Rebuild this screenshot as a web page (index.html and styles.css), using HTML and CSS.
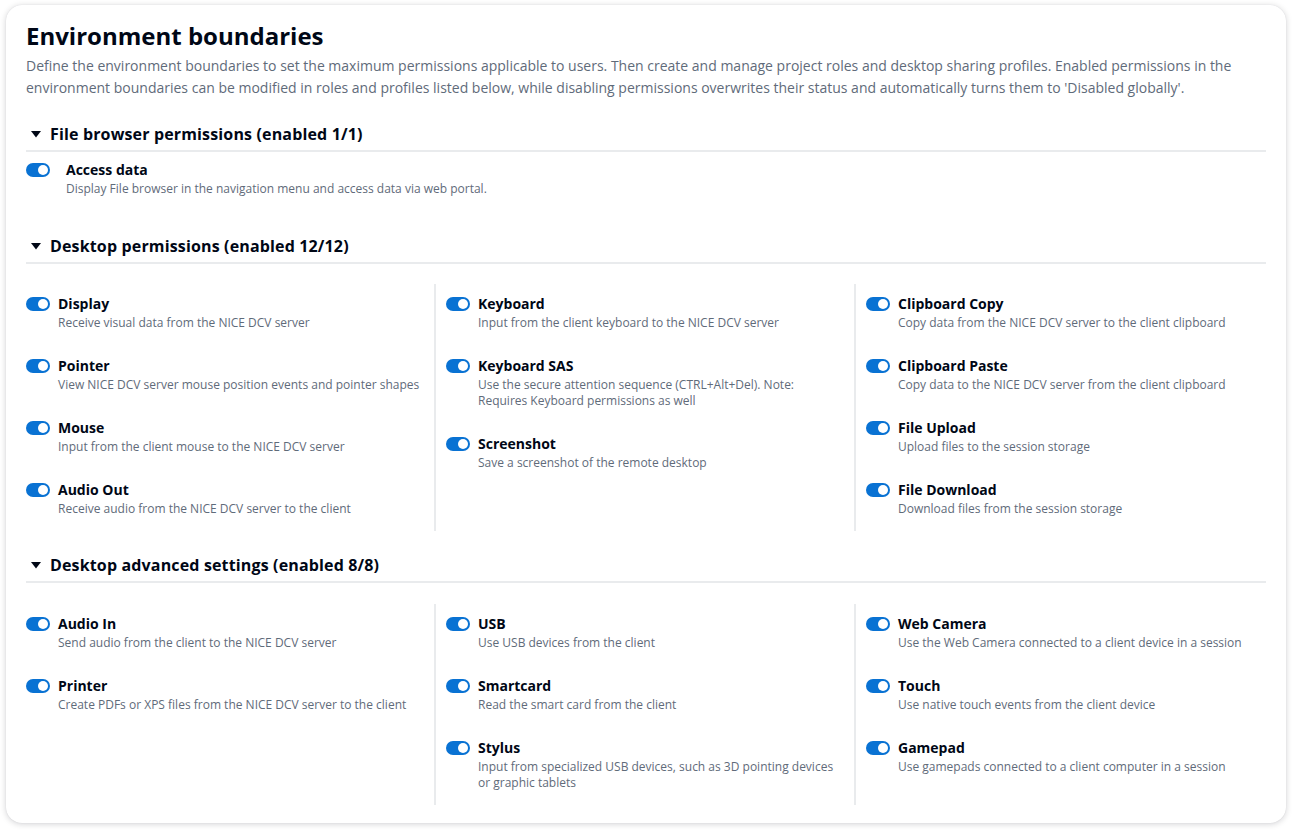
FILE: index.html
```html
<!DOCTYPE html>
<html lang="en">
<head>
<meta charset="utf-8">
<title>Environment boundaries</title>
<link rel="stylesheet" href="styles.css">
</head>
<body>
<div class="card">
  <h1 class="title">Environment boundaries</h1>
  <p class="intro">Define the environment boundaries to set the maximum permissions applicable to users. Then create and manage project roles and desktop sharing profiles. Enabled permissions in the environment boundaries can be modified in roles and profiles listed below, while disabling permissions overwrites their status and automatically turns them to 'Disabled globally'.</p>

  <section class="section sec-file">
    <h2 class="sec-head"><svg class="caret" width="16" height="16" viewBox="0 0 16 16"><polygon points="3,5 13,5 8,11.5" fill="#000716"/></svg>File browser permissions (enabled 1/1)</h2>
    <div class="item item-wide">
      <span class="toggle"></span>
      <div class="item-text">
        <div class="label">Access data</div>
        <div class="desc">Display File browser in the navigation menu and access data via web portal.</div>
      </div>
    </div>
  </section>

  <section class="section sec-desktop">
    <h2 class="sec-head"><svg class="caret" width="16" height="16" viewBox="0 0 16 16"><polygon points="3,5 13,5 8,11.5" fill="#000716"/></svg>Desktop permissions (enabled 12/12)</h2>
    <div class="cols">
      <div class="col">
        <div class="item"><span class="toggle"></span><div class="item-text"><div class="label">Display</div><div class="desc">Receive visual data from the NICE DCV server</div></div></div>
        <div class="item"><span class="toggle"></span><div class="item-text"><div class="label">Pointer</div><div class="desc">View NICE DCV server mouse position events and pointer shapes</div></div></div>
        <div class="item"><span class="toggle"></span><div class="item-text"><div class="label">Mouse</div><div class="desc">Input from the client mouse to the NICE DCV server</div></div></div>
        <div class="item"><span class="toggle"></span><div class="item-text"><div class="label">Audio Out</div><div class="desc">Receive audio from the NICE DCV server to the client</div></div></div>
      </div>
      <div class="col col-mid">
        <div class="item"><span class="toggle"></span><div class="item-text"><div class="label">Keyboard</div><div class="desc">Input from the client keyboard to the NICE DCV server</div></div></div>
        <div class="item"><span class="toggle"></span><div class="item-text"><div class="label">Keyboard SAS</div><div class="desc">Use the secure attention sequence (CTRL+Alt+Del). Note: Requires Keyboard permissions as well</div></div></div>
        <div class="item"><span class="toggle"></span><div class="item-text"><div class="label">Screenshot</div><div class="desc">Save a screenshot of the remote desktop</div></div></div>
      </div>
      <div class="col col-last">
        <div class="item"><span class="toggle"></span><div class="item-text"><div class="label">Clipboard Copy</div><div class="desc">Copy data from the NICE DCV server to the client clipboard</div></div></div>
        <div class="item"><span class="toggle"></span><div class="item-text"><div class="label">Clipboard Paste</div><div class="desc">Copy data to the NICE DCV server from the client clipboard</div></div></div>
        <div class="item"><span class="toggle"></span><div class="item-text"><div class="label">File Upload</div><div class="desc">Upload files to the session storage</div></div></div>
        <div class="item"><span class="toggle"></span><div class="item-text"><div class="label">File Download</div><div class="desc">Download files from the session storage</div></div></div>
      </div>
    </div>
  </section>

  <section class="section sec-adv">
    <h2 class="sec-head"><svg class="caret" width="16" height="16" viewBox="0 0 16 16"><polygon points="3,5 13,5 8,11.5" fill="#000716"/></svg>Desktop advanced settings (enabled 8/8)</h2>
    <div class="cols">
      <div class="col">
        <div class="item"><span class="toggle"></span><div class="item-text"><div class="label">Audio In</div><div class="desc">Send audio from the client to the NICE DCV server</div></div></div>
        <div class="item"><span class="toggle"></span><div class="item-text"><div class="label">Printer</div><div class="desc">Create PDFs or XPS files from the NICE DCV server to the client</div></div></div>
      </div>
      <div class="col col-mid">
        <div class="item"><span class="toggle"></span><div class="item-text"><div class="label">USB</div><div class="desc">Use USB devices from the client</div></div></div>
        <div class="item"><span class="toggle"></span><div class="item-text"><div class="label">Smartcard</div><div class="desc">Read the smart card from the client</div></div></div>
        <div class="item"><span class="toggle"></span><div class="item-text"><div class="label">Stylus</div><div class="desc">Input from specialized USB devices, such as 3D pointing devices or graphic tablets</div></div></div>
      </div>
      <div class="col col-last">
        <div class="item"><span class="toggle"></span><div class="item-text"><div class="label">Web Camera</div><div class="desc">Use the Web Camera connected to a client device in a session</div></div></div>
        <div class="item"><span class="toggle"></span><div class="item-text"><div class="label">Touch</div><div class="desc">Use native touch events from the client device</div></div></div>
        <div class="item"><span class="toggle"></span><div class="item-text"><div class="label">Gamepad</div><div class="desc">Use gamepads connected to a client computer in a session</div></div></div>
      </div>
    </div>
  </section>
</div>
</body>
</html>
```
FILE: styles.css
```css
* { box-sizing: border-box; }
html, body { margin: 0; padding: 0; background: #ffffff; }
body {
  padding: 5px 11px 8px 6px;
  font-family: "Open Sans", "Noto Sans", sans-serif;
  color: #000716;
}
.card {
  background: #ffffff;
  border-radius: 16px;
  box-shadow: 0 1px 6px rgba(0, 7, 22, 0.18), 0 0 1px rgba(0, 7, 22, 0.12);
  padding: 16px 20px 18px 20px;
  height: 818px;
}
.title {
  margin: 0;
  font-size: 24px;
  line-height: 30px;
  font-weight: 700;
}
.intro {
  margin: 4px 0 0 0;
  font-size: 14px;
  line-height: 22px;
  color: #5f6b7a;
}
.section { margin-top: 24px; }
.sec-desktop { margin-top: 38px; }
.sec-adv { margin-top: 23px; }
.sec-head {
  margin: 0;
  display: flex;
  align-items: center;
  gap: 6px;
  font-size: 16px;
  line-height: 22px;
  font-weight: 700;
  letter-spacing: 0.15px;
  padding: 0 0 5px 2px;
  border-bottom: 2px solid #e9ebed;
}
.caret { display: block; flex: none; }
.item {
  display: flex;
  align-items: flex-start;
  gap: 8px;
}
.item-wide { gap: 16px; margin-top: 8px; }
.toggle {
  flex: none;
  position: relative;
  width: 24px;
  height: 14px;
  margin-top: 3px;
  border-radius: 7px;
  background: #0972d3;
}
.toggle::after {
  content: "";
  position: absolute;
  right: 2px;
  top: 2px;
  width: 10px;
  height: 10px;
  border-radius: 50%;
  background: #ffffff;
}
.label {
  font-size: 14px;
  line-height: 20px;
  font-weight: 700;
}
.desc {
  margin-top: 1px;
  font-size: 12px;
  line-height: 16px;
  color: #5f6b7a;
}
.cols {
  display: grid;
  grid-template-columns: 408px 420px 1fr;
  margin-top: 20px;
}
.sec-adv .cols { margin-top: 21px; }
.col {
  display: flex;
  flex-direction: column;
  gap: 25px;
  padding: 10px 0 14px 0;
}
.col-mid, .col-last {
  border-left: 2px solid #e9ebed;
  padding-left: 10px;
  padding-right: 10px;
}
```
